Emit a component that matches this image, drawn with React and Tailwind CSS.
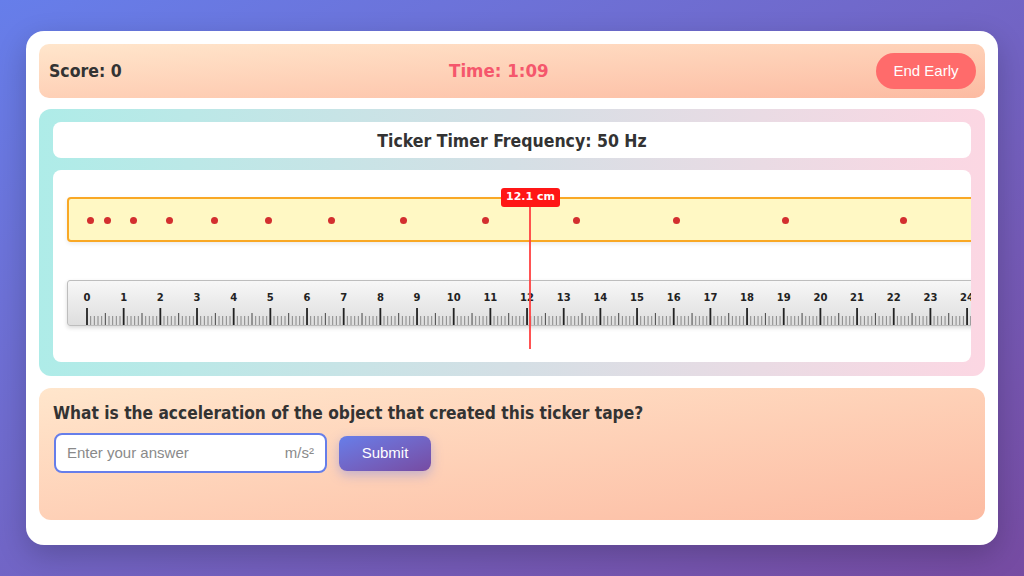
import React from "react";

const PX = 36.67;
const ORIGIN = 19;

function Ruler() {
  const ticks = [];
  for (let i = 0; i <= 250; i++) {
    const x = ORIGIN + (i * PX) / 10;
    if (x > 910) break;
    const major = i % 10 === 0;
    const mid = i % 5 === 0 && !major;
    ticks.push(
      <line
        key={i}
        x1={x}
        x2={x}
        y1={major ? 27 : mid ? 32 : 35}
        y2={44}
        stroke={major ? "#222" : mid ? "#444" : "#888"}
        strokeWidth={major ? 1.8 : 1}
      />
    );
  }
  const labels = [];
  for (let c = 0; c <= 24; c++) {
    const x = ORIGIN + c * PX;
    labels.push(
      <text
        key={c}
        x={x}
        y={20}
        textAnchor="middle"
        fontSize="10"
        fontWeight="700"
        fill="#222"
        fontFamily="'DejaVu Sans', sans-serif"
      >
        {c}
      </text>
    );
  }
  return (
    <div className="mt-[38px] ml-[14px] h-[46px] w-[930px] rounded-l-[3px] border border-[#bdbdbd] bg-gradient-to-b from-[#f7f7f7] to-[#dedede] shadow-[0_2px_4px_rgba(0,0,0,0.15)] overflow-hidden">
      <svg width="930" height="46">
        {ticks}
        {labels}
      </svg>
    </div>
  );
}

const dots = [23, 40, 66, 102, 147, 201, 264, 336, 418, 509, 609, 718, 836];
const heading = { fontFamily: "'DejaVu Sans Condensed', 'DejaVu Sans', sans-serif" };

export default function App() {
  return (
    <div
      className="w-full h-[576px] bg-gradient-to-br from-[#667eea] to-[#764ba2] px-[26px] py-[31px]"
      style={{ fontFamily: "'Liberation Sans', Arial, sans-serif" }}
    >
      <div className="h-[514px] rounded-[18px] bg-white p-[13px] flex flex-col shadow-[0_10px_30px_rgba(0,0,0,0.2)]">
        {/* Header */}
        <div className="h-[54px] rounded-[10px] bg-gradient-to-br from-[#ffe6cc] to-[#fcbba2] flex items-center justify-between pl-[10px] pr-[9px]">
          <div className="text-[17.5px] font-bold text-[#333]" style={heading}>
            Score: 0
          </div>
          <div className="text-[18.5px] font-bold text-[#f5576c]" style={heading}>
            Time: 1:09
          </div>
          <button className="h-[36px] w-[100px] rounded-full bg-[#ff6b6b] text-white text-[15px]">
            End Early
          </button>
        </div>

        {/* Ticker panel */}
        <div className="mt-[11px] h-[267px] rounded-[12px] bg-gradient-to-r from-[#aeece8] via-[#d4dfe5] to-[#fcd7e3] p-[14px] pt-[13px] flex flex-col">
          <div className="h-[36px] rounded-[8px] bg-white flex items-center justify-center pt-[2px]">
            <span className="text-[17.5px] font-bold text-[#333]" style={heading}>
              Ticker Timer Frequency: 50 Hz
            </span>
          </div>
          <div className="relative mt-[12px] h-[192px] rounded-[8px] bg-white overflow-hidden">
            <div className="relative mt-[27px] ml-[14px] h-[45px] w-[930px] rounded-l-[4px] border-2 border-[#f9a825] bg-[#fff8c4] shadow-[0_2px_4px_rgba(0,0,0,0.08)]">
              {dots.map((x) => (
                <div
                  key={x}
                  className="absolute top-[18px] h-[7px] w-[7px] rounded-full bg-[#d32f2f]"
                  style={{ left: x - 2 - 3.5 }}
                />
              ))}
            </div>
            <Ruler />
            {/* measurement marker */}
            <div className="absolute left-[476px] top-[18px] h-[161px] w-[2px] bg-[#ff4040]/90" />
            <div className="absolute left-[448px] top-[18px] h-[19px] w-[59px] rounded-[3px] bg-[#ff1616] flex items-center justify-center">
              <span
                className="text-[11px] font-bold text-white"
                style={{ fontFamily: "'DejaVu Sans', sans-serif" }}
              >
                12.1 cm
              </span>
            </div>
          </div>
        </div>

        {/* Question */}
        <div className="mt-[12px] h-[132px] rounded-[12px] bg-gradient-to-br from-[#ffe6cc] to-[#fcbba2] px-[14px] pt-[14px]">
          <div className="text-[17.2px] font-bold text-[#333] leading-[22px]" style={heading}>
            What is the acceleration of the object that created this ticker tape?
          </div>
          <div className="mt-[9px] flex items-center gap-[12px]">
            <div className="ml-[1px] h-[40px] w-[273px] rounded-[8px] border-2 border-[#667eea] bg-white flex items-center justify-between px-[11px]">
              <span className="text-[15px] text-[#8a8a8a]">Enter your answer</span>
              <span className="text-[15px] text-[#8a8a8a]">m/s²</span>
            </div>
            <button className="h-[35px] w-[92px] rounded-[8px] bg-gradient-to-br from-[#667eea] to-[#764ba2] text-white text-[15px] shadow-[0_4px_12px_rgba(102,126,234,0.4)]">
              Submit
            </button>
          </div>
        </div>
      </div>
    </div>
  );
}
